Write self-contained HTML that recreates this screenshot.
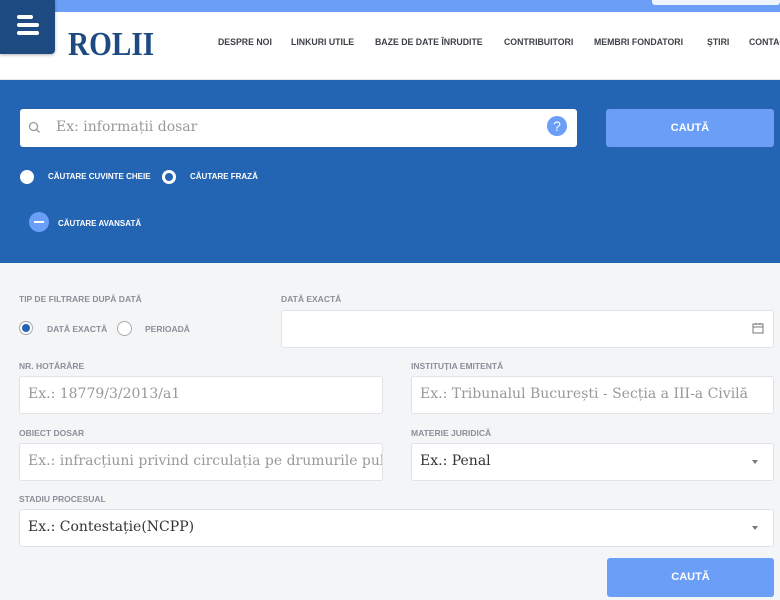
<!DOCTYPE html>
<html><head><meta charset="utf-8"><style>
*{box-sizing:border-box;margin:0;padding:0}
body{width:780px;height:600px;overflow:hidden;background:#f4f5f7;font-family:"Liberation Sans",sans-serif;position:relative}
.a{position:absolute}
.top{left:0;top:0;width:780px;height:12px;background:#6a9ef7}
.topbox{left:652px;top:0;width:128px;height:5px;background:#eef3fd;border-radius:0 0 3px 3px}
.hdr{left:0;top:12px;width:780px;height:68px;background:#fff;border-bottom:1px solid #e3e8ef}
.menu{left:0;top:0;width:55px;height:54px;background:#1d4a80;border-radius:0 0 4px 0;box-shadow:0 1px 3px rgba(0,0,0,.3)}
.menu i{position:absolute;left:17px;width:22px;height:4px;background:#fff;border-radius:2px}
.logo{left:68px;top:26px;font-family:"Liberation Serif",serif;font-weight:bold;font-size:34px;color:#1d4a80;transform:scaleX(.86);transform-origin:left top}
.nav{top:37px;font-size:9.5px;font-weight:bold;color:#3d4148;white-space:nowrap;transform:scaleX(.92);transform-origin:left top}
.blue{left:0;top:80px;width:780px;height:183px;background:#2365b3}
.inp{background:#fff;border:1px solid #dfe3e8;border-radius:3px}
.ph{font-family:"DejaVu Serif","Liberation Serif",serif;color:#999;font-size:14px}
.btn{background:#6a9ef7;border-radius:3px;color:#fff;font-weight:bold;font-size:11px;text-align:center}
.wl{color:#fff;font-size:8px;font-weight:bold}
.lbl{font-size:8.5px;font-weight:bold;color:#8a9099}
.gl{font-size:8.5px;font-weight:bold;color:#8a9099}
.caret{width:0;height:0;border-left:3px solid transparent;border-right:3px solid transparent;border-top:4px solid #777}
</style></head><body>
<div class="a top"></div><div class="a topbox"></div>
<div class="a hdr"></div>
<div class="a menu"><i style="top:15px;width:16px;left:17px"></i><i style="top:23px"></i><i style="top:31px"></i></div>
<div class="a logo">ROLII</div>
<div class="a nav" style="left:218px">DESPRE NOI</div>
<div class="a nav" style="left:291px">LINKURI UTILE</div>
<div class="a nav" style="left:375px">BAZE DE DATE ÎNRUDITE</div>
<div class="a nav" style="left:504px">CONTRIBUITORI</div>
<div class="a nav" style="left:594px">MEMBRI FONDATORI</div>
<div class="a nav" style="left:707px">ȘTIRI</div>
<div class="a nav" style="left:749px">CONTACT</div>
<div class="a blue"></div>
<div class="a inp" style="left:20px;top:109px;width:557px;height:38px;border:none"></div>
<svg class="a" style="left:28px;top:121px" width="13" height="13" viewBox="0 0 13 13"><circle cx="5.5" cy="5.5" r="4" fill="none" stroke="#999" stroke-width="1.3"/><path d="M8.5 8.5L11.5 11.5" stroke="#999" stroke-width="1.3"/></svg>
<div class="a ph" style="left:56px;top:119px">Ex: informații dosar</div>
<div class="a" style="left:547px;top:116px;width:20px;height:20px;border-radius:50%;background:#6a9ef7;color:#fff;font-size:14px;text-align:center;line-height:20px">?</div>
<div class="a btn" style="left:606px;top:109px;width:168px;height:38px;line-height:38px">CAUTĂ</div>
<div class="a" style="left:20px;top:170px;width:14px;height:14px;border-radius:50%;background:#fff"></div>
<div class="a wl" style="left:48px;top:172px">CĂUTARE CUVINTE CHEIE</div>
<div class="a" style="left:162px;top:170px;width:14px;height:14px;border-radius:50%;border:3px solid #fff"></div>
<div class="a wl" style="left:190px;top:172px">CĂUTARE FRAZĂ</div>
<div class="a" style="left:29px;top:212px;width:20px;height:20px;border-radius:50%;background:#6a9ef7"><div style="position:absolute;left:5px;top:9px;width:10px;height:2px;background:#fff"></div></div>
<div class="a wl" style="left:58px;top:219px">CĂUTARE AVANSATĂ</div>

<div class="a lbl" style="left:19px;top:294px">TIP DE FILTRARE DUPĂ DATĂ</div>
<div class="a" style="left:19px;top:321px;width:14px;height:14px;border-radius:50%;border:1px solid #aaa;background:#fff"><div style="position:absolute;left:2px;top:2px;width:8px;height:8px;border-radius:50%;background:#2365b3"></div></div>
<div class="a gl" style="left:47px;top:324px">DATĂ EXACTĂ</div>
<div class="a" style="left:117px;top:321px;width:15px;height:15px;border-radius:50%;border:1px solid #aaa;background:#fff"></div>
<div class="a gl" style="left:145px;top:324px">PERIOADĂ</div>
<div class="a lbl" style="left:281px;top:294px">DATĂ EXACTĂ</div>
<div class="a inp" style="left:281px;top:310px;width:493px;height:38px"></div>
<svg class="a" style="left:752px;top:322px" width="12" height="12" viewBox="0 0 12 12"><rect x="1" y="2" width="10" height="9" fill="none" stroke="#777" stroke-width="1"/><path d="M1 5H11M4 1V3M8 1V3" stroke="#777"/></svg>

<div class="a lbl" style="left:19px;top:361px">NR. HOTĂRÂRE</div>
<div class="a inp" style="left:19px;top:376px;width:364px;height:38px"></div>
<div class="a ph" style="left:28px;top:386px">Ex.: 18779/3/2013/a1</div>
<div class="a lbl" style="left:411px;top:361px">INSTITUȚIA EMITENTĂ</div>
<div class="a inp" style="left:411px;top:376px;width:363px;height:38px"></div>
<div class="a ph" style="left:420px;top:386px">Ex.: Tribunalul București - Secția a III-a Civilă</div>

<div class="a lbl" style="left:19px;top:428px">OBIECT DOSAR</div>
<div class="a inp" style="left:19px;top:443px;width:364px;height:38px;overflow:hidden"><div class="ph" style="position:absolute;left:8px;top:9px;white-space:nowrap">Ex.: infracțiuni privind circulația pe drumurile publice</div></div>
<div class="a lbl" style="left:411px;top:428px">MATERIE JURIDICĂ</div>
<div class="a inp" style="left:411px;top:443px;width:363px;height:38px"></div>
<div class="a ph" style="left:420px;top:453px;color:#333">Ex.: Penal</div>
<div class="a caret" style="left:752px;top:460px"></div>

<div class="a lbl" style="left:19px;top:494px">STADIU PROCESUAL</div>
<div class="a inp" style="left:19px;top:509px;width:755px;height:38px"></div>
<div class="a ph" style="left:28px;top:519px;color:#333">Ex.: Contestație(NCPP)</div>
<div class="a caret" style="left:752px;top:526px"></div>
<div class="a btn" style="left:607px;top:558px;width:167px;height:39px;line-height:39px">CAUTĂ</div>
</body></html>
